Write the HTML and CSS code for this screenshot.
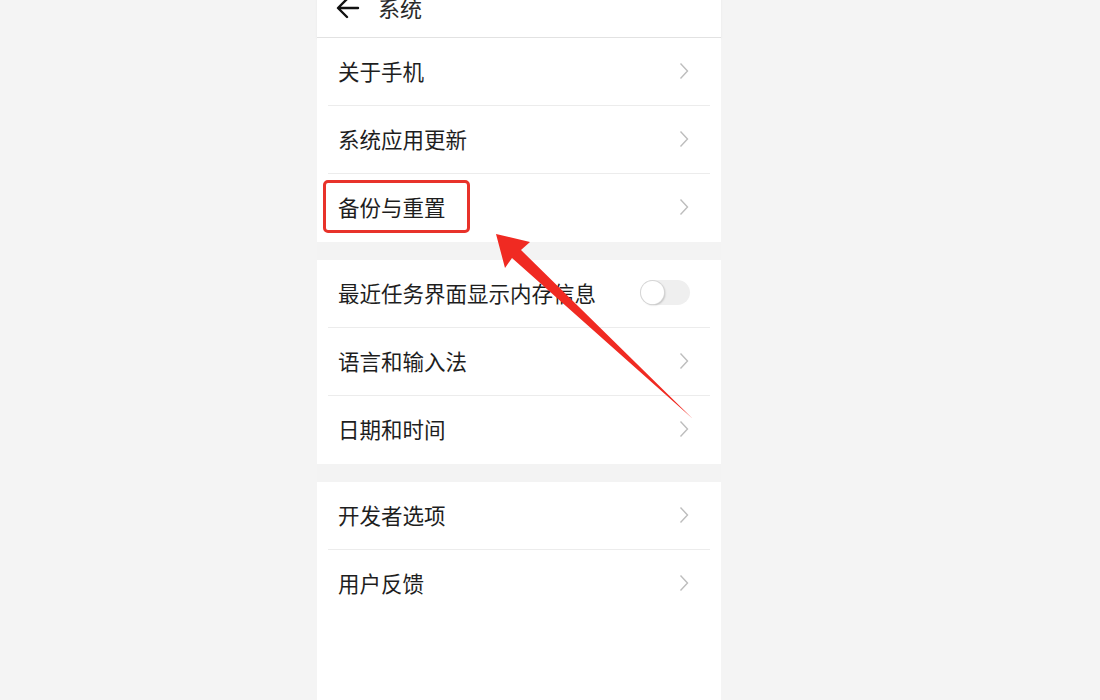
FILE: index.html
```html
<!DOCTYPE html>
<html lang="zh">
<head>
<meta charset="utf-8">
<link rel="stylesheet" href="styles.css">
</head>
<body>
<div class="panel">
  <div class="header">
    <svg class="back" width="24" height="22" viewBox="0 0 24 22"><path d="M22 11 H3 M11 2 L2 11 L11 20" fill="none" stroke="#111" stroke-width="2.4" stroke-linecap="round" stroke-linejoin="round"/></svg>
    <span class="title">系统</span>
  </div>
  <div class="group">
    <div class="row"><div class="inner"><span class="label">关于手机</span><svg class="chev" width="10" height="18" viewBox="0 0 10 18"><path d="M1.5 1.5 L8.5 9 L1.5 16.5" fill="none" stroke="#bdbdbd" stroke-width="1.4"/></svg></div></div>
    <div class="row"><div class="inner"><span class="label">系统应用更新</span><svg class="chev" width="10" height="18" viewBox="0 0 10 18"><path d="M1.5 1.5 L8.5 9 L1.5 16.5" fill="none" stroke="#bdbdbd" stroke-width="1.4"/></svg></div></div>
    <div class="row hl"><div class="inner last"><span class="label">备份与重置</span><svg class="chev" width="10" height="18" viewBox="0 0 10 18"><path d="M1.5 1.5 L8.5 9 L1.5 16.5" fill="none" stroke="#bdbdbd" stroke-width="1.4"/></svg></div><div class="mark"></div></div>
  </div>
  <div class="group">
    <div class="row"><div class="inner"><span class="label">最近任务界面显示内存信息</span><span class="toggle"><span class="knob"></span></span></div></div>
    <div class="row"><div class="inner"><span class="label">语言和输入法</span><svg class="chev" width="10" height="18" viewBox="0 0 10 18"><path d="M1.5 1.5 L8.5 9 L1.5 16.5" fill="none" stroke="#bdbdbd" stroke-width="1.4"/></svg></div></div>
    <div class="row"><div class="inner last"><span class="label">日期和时间</span><svg class="chev" width="10" height="18" viewBox="0 0 10 18"><path d="M1.5 1.5 L8.5 9 L1.5 16.5" fill="none" stroke="#bdbdbd" stroke-width="1.4"/></svg></div></div>
  </div>
  <div class="group fill">
    <div class="row"><div class="inner"><span class="label">开发者选项</span><svg class="chev" width="10" height="18" viewBox="0 0 10 18"><path d="M1.5 1.5 L8.5 9 L1.5 16.5" fill="none" stroke="#bdbdbd" stroke-width="1.4"/></svg></div></div>
    <div class="row"><div class="inner last"><span class="label">用户反馈</span><svg class="chev" width="10" height="18" viewBox="0 0 10 18"><path d="M1.5 1.5 L8.5 9 L1.5 16.5" fill="none" stroke="#bdbdbd" stroke-width="1.4"/></svg></div></div>
  </div>
</div>
<svg class="arrow" width="1100" height="700" viewBox="0 0 1100 700"><polygon points="496,234 530,242 521,250 693,419 512,258 505,268" fill="#f02a22"/></svg>
</body>
</html>
```

FILE: styles.css
```css
html, body {
  margin: 0;
  padding: 0;
  background: #f4f4f4;
  font-family: "Noto Sans CJK SC", "Noto Sans", sans-serif;
  overflow: hidden;
}
.panel {
  width: 404px;
  margin-left: 317px;
  margin-top: -20px;
  min-height: 720px;
  display: flex;
  flex-direction: column;
  gap: 18px;
  background: #f3f3f3;
}
.header {
  height: 57px;
  background: #fff;
  border-bottom: 1px solid #e2e2e2;
  box-shadow: 0 1px 2px rgba(0,0,0,0.06);
  display: flex;
  align-items: center;
  padding-left: 19px;
  margin-bottom: -18px;
}
.back {
  display: block;
  margin-top: -2px;
}
.title {
  margin-left: 18px;
  font-size: 22px;
  color: #2a2a2a;
  line-height: 1;
  margin-top: -4px;
}
.group {
  background: #fff;
}
.group.fill {
  flex: 1;
}
.row {
  position: relative;
  height: 68px;
}
.inner {
  margin: 0 11px;
  height: 68px;
  box-sizing: border-box;
  border-bottom: 1px solid #ececec;
  padding: 0 20px 0 10px;
  display: flex;
  align-items: center;
  justify-content: space-between;
}
.inner.last {
  border-bottom: none;
}
.label {
  font-size: 21.5px;
  color: #1e1e1e;
  line-height: 1;
  margin-top: -2px;
}
.chev {
  display: block;
  margin-right: 1px;
  margin-top: -2px;
}
.toggle {
  width: 50px;
  height: 25px;
  border-radius: 13px;
  background: #efefef;
  display: flex;
  align-items: center;
  padding-left: 1px;
  box-sizing: border-box;
  margin-top: -2px;
}
.knob {
  width: 23px;
  height: 23px;
  border-radius: 50%;
  background: #fff;
  box-shadow: 0 0 0 1px #d6d6d6, 1px 1px 2px rgba(0,0,0,0.25);
}
.mark {
  position: absolute;
  left: 6px;
  top: 6px;
  width: 147px;
  height: 53px;
  box-sizing: border-box;
  border: 3px solid #e8322a;
  border-radius: 5px;
}
.arrow {
  position: absolute;
  left: 0;
  top: 0;
  pointer-events: none;
}
```
